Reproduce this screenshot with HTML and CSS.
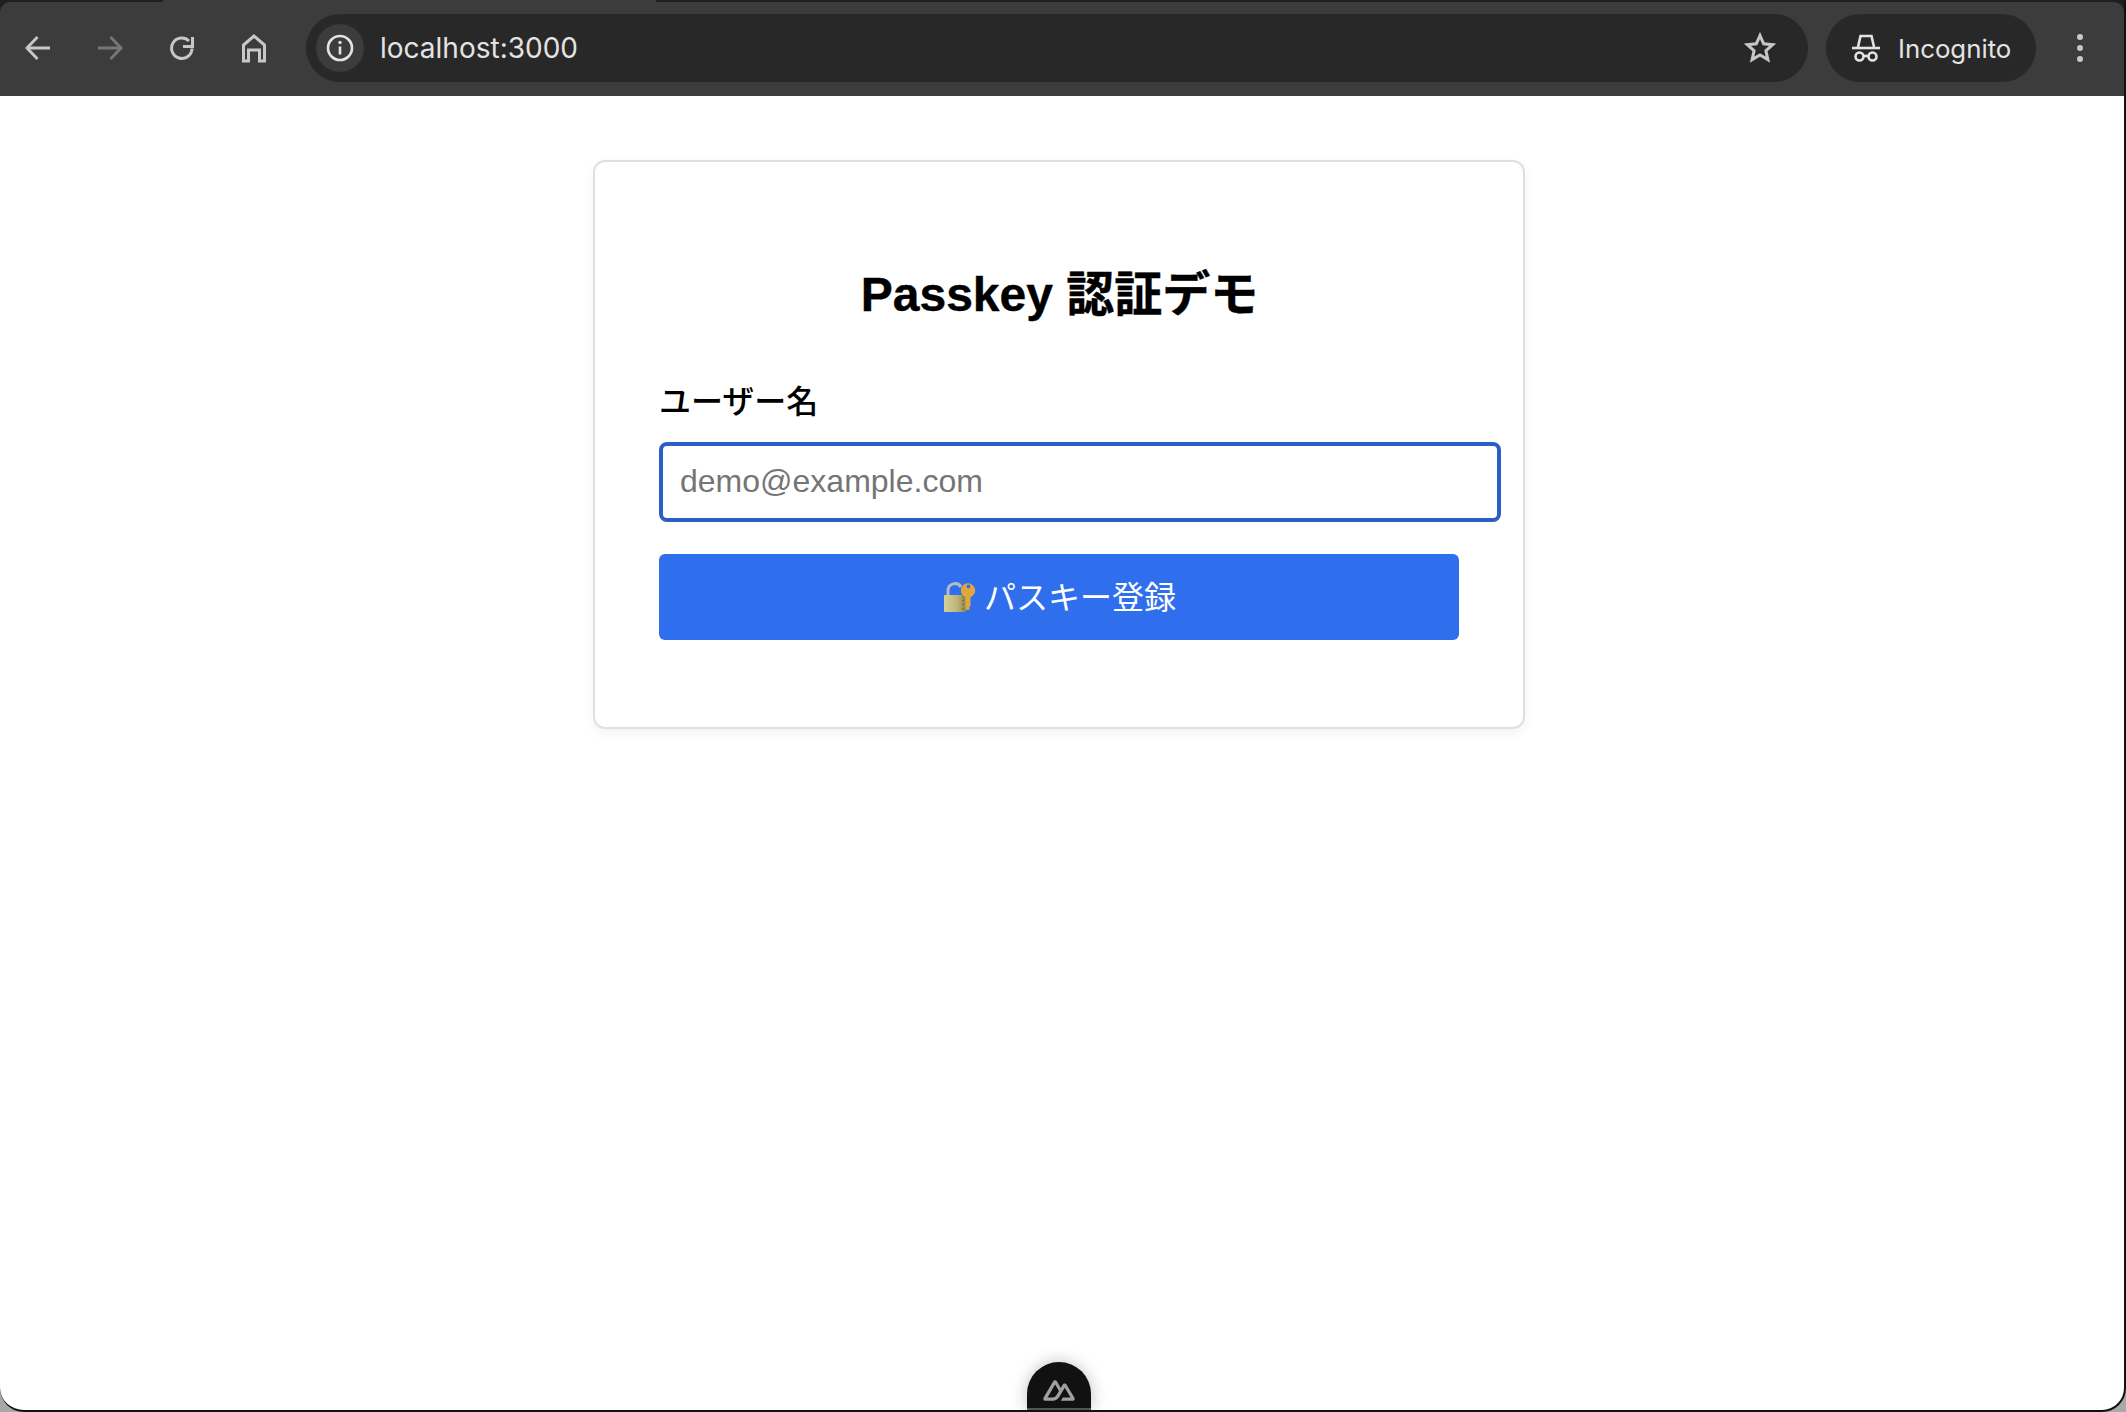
FILE: index.html
```html
<!DOCTYPE html>
<html lang="ja">
<head>
    <meta charset="UTF-8">
    <meta name="viewport" content="width=device-width, initial-scale=1.0">
    <title>Passkey 認証デモ</title>
    <link rel="stylesheet" href="styles.css">
</head>
<body>

<div class="window">
    <div class="chrome">
        <div class="tab-strip">
            <div class="tab-dark tab-dark-left"></div>
            <div class="tab-dark tab-dark-right"></div>
        </div>

        <header class="toolbar">
            <div class="nav-buttons">
                <button class="nav-button" aria-label="Back">
                    <svg class="icon" width="26" height="26" viewBox="0 0 26 26"><path d="M25 13H3M12.5 2 2 13l10.5 11"/></svg>
                </button>
                <button class="nav-button nav-button-off" aria-label="Forward">
                    <svg class="icon" width="26" height="26" viewBox="0 0 26 26"><path d="M1 13h22M13.5 2 24 13 13.5 24"/></svg>
                </button>
                <button class="nav-button" aria-label="Reload">
                    <svg class="icon" width="26" height="26" viewBox="0 0 26 26"><path d="M23 13.5A10.2 10.2 0 1 1 20 6"/><path d="M23.5 2v9.5H14"/></svg>
                </button>
                <button class="nav-button" aria-label="Home">
                    <svg class="icon icon-home" width="26" height="30" viewBox="0 0 26 30"><path d="M2.5 28V12L13 3l10.500 9v16h-5V17h-11v11z"/></svg>
                </button>
            </div>

            <div class="address-bar">
                <span class="site-info">
                    <svg class="icon icon-thin" width="28" height="28" viewBox="0 0 28 28">
                        <circle cx="14" cy="14" r="12"/>
                        <path d="M14 12.500v8"/>
                        <circle class="icon-dot" cx="14" cy="8.500" r="1.700"/>
                    </svg>
                </span>
                <span class="address-text">localhost:3000</span>
                <svg class="icon icon-star" width="32" height="32" viewBox="0 0 32 32"><path d="M16 3.500l3.700 8.300 9 .9-6.800 6 2 8.900-7.900-4.600-7.900 4.600 2-8.900-6.800-6 9-.9z"/></svg>
            </div>

            <div class="incognito">
                <svg class="icon icon-thin" width="30" height="28" viewBox="0 0 30 28">
                    <path d="M7 13 9.500 2h11L23 13"/>
                    <path d="M1 14h28"/>
                    <circle cx="8.500" cy="22.500" r="4"/>
                    <circle cx="21.500" cy="22.500" r="4"/>
                    <path d="M12.500 22h5"/>
                </svg>
                <span>Incognito</span>
            </div>

            <div class="menu-dots">
                <span></span>
                <span></span>
                <span></span>
            </div>
        </header>
    </div>

    <main class="page">
        <div class="card">
            <h1>Passkey 認証デモ</h1>
            <form class="passkey-form">
                <label for="username">ユーザー名</label>
                <input type="text" id="username" placeholder="demo@example.com">
                <button type="button" class="register-button">
                    <svg class="lock-emoji" width="34" height="32" viewBox="0 0 34 32">
                        <defs>
                            <linearGradient id="lock-body" x1="0" y1="0" x2="1" y2="0">
                                <stop offset="0" stop-color="#d6d09a"/>
                                <stop offset="0.6" stop-color="#bdb476"/>
                                <stop offset="1" stop-color="#8f8650"/>
                            </linearGradient>
                        </defs>
                        <path d="M6 15V9.500a7 7 0 0 1 13-3.500" fill="none" stroke="#b7bcc4" stroke-width="3"/>
                        <rect x="2" y="14" width="22" height="17" rx="1" fill="url(#lock-body)"/>
                        <path d="M20 15.500h2M20 19.500h2M20 23.500h2M20 27.500h2" stroke="#7c7240" stroke-width="1.500"/>
                        <path d="M23.500 14h5v11l-1.500 1.500 1 1-2 2-2.500-1.500z" fill="#e0a83c"/>
                        <circle cx="26" cy="9.500" r="7.200" fill="#e0a83c"/>
                        <circle cx="26.500" cy="5.500" r="1.900" fill="#2f6fed"/>
                    </svg>
                    <span>パスキー登録</span>
                </button>
            </form>
        </div>
    </main>

    <button class="devtools-button" aria-label="Nuxt DevTools">
        <svg width="32" height="21" viewBox="0 4 24 16"><path d="M13.4642 19.8295h8.9218c.2834 0 .5618-.0723.8072-.2098a1.5899 1.5899 0 0 0 .5908-.5732 1.5293 1.5293 0 0 0 .2161-.783 1.5294 1.5294 0 0 0-.2162-.7831L17.7 7.4836a1.5899 1.5899 0 0 0-.5907-.5732 1.6524 1.6524 0 0 0-.8072-.2098c-.2833 0-.5617.0723-.8071.2098a1.5897 1.5897 0 0 0-.5908.5732l-1.5321 2.6-2.9955-5.0839a1.5904 1.5904 0 0 0-.5908-.5732 1.6533 1.6533 0 0 0-.8073-.2098c-.2833 0-.5617.0723-.8071.2098a1.5905 1.5905 0 0 0-.5908.5732L.2168 17.4801A1.5292 1.5292 0 0 0 0 18.2632c0 .2749.0746.5449.2167.7829.1421.238.3465.4358.5908.5732.2454.1375.5238.2098.8072.2098h5.6003c2.219 0 3.8554-.9454 4.9813-2.7899l2.7337-4.6397 1.4643-2.4832 4.3945 7.4581h-5.8589Zm-6.3411-2.4855-3.9085-.0008 5.8589-9.9437 2.9232 4.9719-1.9574 3.3241c-.7477 1.2094-1.5971 1.6485-2.9162 1.6485z"/></svg>
    </button>
</div>

</body>
</html>
```

FILE: styles.css
```css
html, body {
    margin: 0;
    padding: 0;
    height: 100%;
    overflow: hidden;
    background: #a8a8a8;
}
body {
    font-family: 'Liberation Sans', 'Noto Sans CJK JP', sans-serif;
}
.window {
    position: relative;
    box-sizing: border-box;
    height: 1412px;
    width: 2126px;
    display: flex;
    flex-direction: column;
    background: #fff;
    border-right: 2px solid #111;
    border-bottom: 2px solid #111;
    border-radius: 0 0 24px 24px;
    overflow: hidden;
}

/* browser chrome */
.chrome {
    background: #1f1f1f;
}
.tab-strip {
    display: flex;
    justify-content: space-between;
    height: 2px;
    background: #3c3c3c;
}
.tab-dark {
    background: #1f1f1f;
}
.tab-dark-left {
    width: 163px;
}
.tab-dark-right {
    width: 1468px;
}
.toolbar {
    display: flex;
    align-items: center;
    box-sizing: border-box;
    height: 94px;
    padding: 0 0 2px 2px;
    background: #3c3c3c;
    border-radius: 10px 10px 0 0;
    color: #e3e3e3;
    font-family: Inter, sans-serif;
}
.nav-buttons {
    display: flex;
    margin-right: 16px;
}
.nav-button {
    display: flex;
    align-items: center;
    justify-content: center;
    width: 72px;
    height: 68px;
    padding: 0;
    background: none;
    border: none;
    color: #c7c7c7;
}
.nav-button-off {
    color: #767676;
}
.icon {
    display: block;
    fill: none;
    stroke: currentColor;
    stroke-width: 3;
}
.icon-thin {
    stroke-width: 2.6;
}
.icon-dot {
    fill: currentColor;
    stroke: none;
}
.icon-star {
    margin-left: auto;
    margin-right: 32px;
    color: #c7c7c7;
}
.address-bar {
    display: flex;
    align-items: center;
    width: 1502px;
    height: 68px;
    padding-left: 10px;
    box-sizing: border-box;
    background: #282828;
    border-radius: 34px;
}
.site-info {
    display: flex;
    align-items: center;
    justify-content: center;
    width: 48px;
    height: 48px;
    margin-right: 16px;
    background: #3c3c3c;
    border-radius: 50%;
}
.address-text {
    font-size: 28px;
    color: #e3e3e3;
}
.incognito {
    display: flex;
    align-items: center;
    gap: 17px;
    width: 210px;
    height: 68px;
    margin-left: 18px;
    padding-left: 25px;
    box-sizing: border-box;
    background: #282828;
    border-radius: 34px;
    font-size: 25.8px;
}
.menu-dots {
    display: flex;
    flex-direction: column;
    gap: 5px;
    margin-left: 41px;
}
.menu-dots span {
    width: 6px;
    height: 6px;
    background: #c7c7c7;
    border-radius: 50%;
}

/* page content */
.page {
    display: flex;
    justify-content: center;
    padding: 64px 6px 0 0;
}
.card {
    box-sizing: border-box;
    width: 932px;
    height: 569px;
    padding: 105px 63px 87px 64px;
    background: #fff;
    border: 2px solid #e0e0e0;
    border-radius: 12px;
    box-shadow: 0 4px 12px rgba(0, 0, 0, 0.05);
}
h1 {
    margin: 0 0 59px;
    font-size: 48px;
    line-height: 56px;
    font-weight: 700;
    text-align: center;
    color: #000;
    -webkit-text-stroke: 0.4px #000;
}
.passkey-form {
    width: 800px;
}
label {
    display: block;
    margin-bottom: 20px;
    font-size: 32px;
    line-height: 40px;
    font-weight: 500;
    color: #000;
}
input {
    display: block;
    box-sizing: border-box;
    width: 842px;
    height: 80px;
    padding: 0 18px 2px 17px;
    font-family: 'Liberation Sans', sans-serif;
    font-size: 32px;
    background: #fff;
    border: 4px solid #2b5fc7;
    border-radius: 8px;
    outline: none;
}
input::placeholder {
    color: #757575;
    opacity: 1;
}
.register-button {
    display: flex;
    align-items: center;
    justify-content: center;
    gap: 8px;
    width: 800px;
    height: 86px;
    margin-top: 32px;
    padding: 0;
    font-family: 'Liberation Sans', 'Noto Sans CJK JP', sans-serif;
    font-size: 32px;
    color: #fff;
    background: #2f6fed;
    border: none;
    border-radius: 6px;
}
.register-button span {
    margin-bottom: 5px;
}
.lock-emoji {
    display: block;
}
.devtools-button {
    position: absolute;
    left: 1027px;
    bottom: 0;
    display: flex;
    justify-content: center;
    box-sizing: border-box;
    width: 64px;
    height: 48px;
    padding: 18px 0 0;
    background: #111;
    border: none;
    border-bottom: 2px solid #555;
    border-radius: 32px 32px 0 0;
    box-shadow: 0 0 16px rgba(0, 0, 0, 0.25);
}
.devtools-button svg {
    fill: #a0a0a0;
    display: block;
}
```
